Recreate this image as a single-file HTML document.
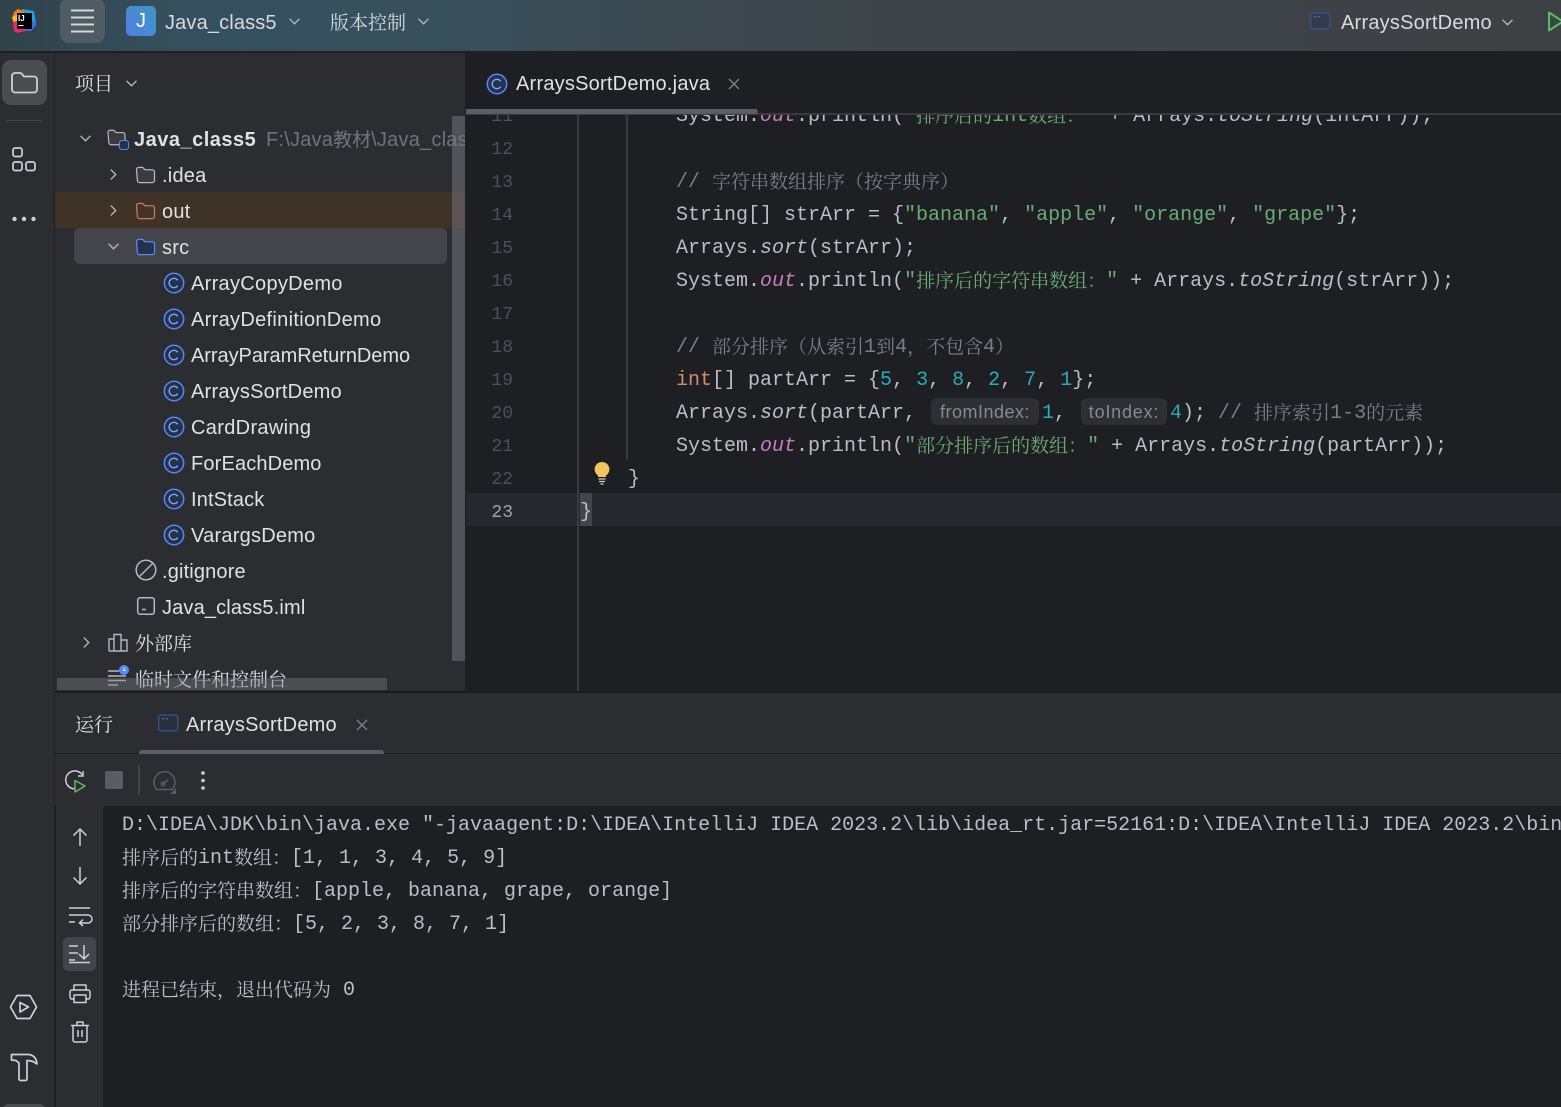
<!DOCTYPE html>
<html lang="zh"><head><meta charset="utf-8"><title>IDE</title>
<style>
*{box-sizing:border-box}
html,body{margin:0;padding:0;width:1561px;height:1107px;overflow:hidden;background:#1e1f22}
body{position:relative;font-family:"Liberation Sans","Noto Serif CJK SC",sans-serif;color:#dfe1e5}
.a{position:absolute}
.t{position:absolute;white-space:pre;font-size:20px;line-height:36px;height:36px;color:#dfe1e5;letter-spacing:.22px;margin-top:1px}
.z{font-family:"Noto Serif CJK SC",serif;font-size:19px;letter-spacing:0;margin-top:0}
.c{position:absolute;white-space:pre;font-family:"Liberation Mono","Noto Serif CJK SC",monospace;font-size:20px;line-height:33px;height:33px;color:#bcbec4;margin-top:1px}
.c i{font-style:italic}
.c b{font-weight:normal;font-family:"Noto Serif CJK SC",serif;font-size:19px;line-height:0;position:relative;top:1px}
.o{color:#c77dbb;font-style:italic}.s{color:#6aab73}.n{color:#2aacb8}.k{color:#cf8e6d}.m{color:#7a7e85}
.ln{position:absolute;left:470px;width:43px;text-align:right;font-family:"Liberation Mono",monospace;font-size:18px;line-height:33px;height:33px;color:#4b5059;margin-top:2px}
svg{position:absolute;overflow:visible;fill:none}
.hint{position:absolute;height:27px;top:398px;background:#2d2f33;border-radius:6px;color:#868a91;font-size:18px;line-height:28px;text-align:center;white-space:pre}
</style></head><body>
<svg width="0" height="0" style="position:absolute"><defs>
<symbol id="cls" viewBox="0 0 22 22" overflow="visible"><circle cx="11" cy="11" r="9.7" fill="#25324d" stroke="#548af7" stroke-width="1.5"/><path d="M14.7 8.3a4.7 4.7 0 1 0 0 5.4" stroke="#7ea6f5" stroke-width="1.4" fill="none"/></symbol>
<symbol id="fold" viewBox="0 0 22 20" overflow="visible"><path d="M1 4a2.5 2.5 0 0 1 2.5-2.500h4.300l2.700 2.700h8a2.500 2.500 0 0 1 2.500 2.500v9.300a2.500 2.500 0 0 1-2.500 2.500h-14a2.500 2.500 0 0 1-2.500-2.500z" stroke-width="1.4" stroke-linejoin="round"/></symbol>
<symbol id="chd" viewBox="0 0 14 10" overflow="visible"><path d="M1.500 2l5.500 5.500L12.500 2" stroke="#b4b8bf" stroke-width="1.500" fill="none"/></symbol>
<symbol id="chr" viewBox="0 0 10 14" overflow="visible"><path d="M2 1.500L7.500 7L2 12.500" stroke="#b4b8bf" stroke-width="1.500" fill="none"/></symbol>
<symbol id="win" viewBox="0 0 22 18" overflow="visible"><rect x=".7" y=".7" width="20" height="16.500" rx="2.500" fill="rgba(37,50,77,.45)" stroke="#35538f" stroke-width="1.400"/><path d="M4 4.500h2.500M8 4.500h2.500" stroke="#4a6fae" stroke-width="1.200"/></symbol>
</defs></svg>

<!-- title bar -->
<div class="a" style="left:0;top:0;width:1561px;height:51px;background:linear-gradient(90deg,#31424a 0,#34505e 180px,#37505c 420px,#3d464c 760px,#3e4144 1561px)"></div>
<div class="a" style="left:0;top:51px;width:1561px;height:2px;background:#1e1f22"></div>
<svg style="left:12px;top:9px" width="24" height="24" viewBox="0 0 24 24"><path d="M10 0L22 2 24 14 20 21 10 22z" fill="#1f9fe8"/><path d="M16 12h8v4l-5 6h-7z" fill="#3b6cf0"/><path d="M6 0L12 2 12 10 0 10 2 3z" fill="#f97a12"/><path d="M0 8l5-2 1 6-4 3z" fill="#f6c21c"/><path d="M1 13l7-2 6 11-9 2-3-2z" fill="#f0266f"/><rect x="5" y="4" width="15" height="16" fill="#000"/><text x="6" y="12" font-family="Liberation Sans" font-weight="bold" font-size="8" fill="#fff">IJ</text><path d="M6.500 16.500h5" stroke="#fff" stroke-width="1"/></svg>
<div class="a" style="left:60px;top:-2px;width:45px;height:45px;border-radius:9px;background:#4e5c63"></div>
<svg style="left:71px;top:10px" width="24" height="23"><path d="M0 1h23M0 8h23M0 15h23M0 22h23" stroke="#d5d7da" stroke-width="2" transform="translate(0 -.500)"/></svg>
<div class="a" style="left:126px;top:6px;width:30px;height:30px;border-radius:5px;background:linear-gradient(45deg,#5080e4,#3e96c0);color:#fff;font-size:20px;line-height:30px;text-align:center">J</div>
<div class="t" style="left:165px;top:4px;color:#d7dadf;letter-spacing:.15px">Java_class5</div>
<svg style="left:288px;top:17px" width="13" height="9"><use href="#chd" width="13" height="9"/></svg>
<div class="t z" style="left:330px;top:4px;color:#d7dadf">版本控制</div>
<svg style="left:417px;top:17px" width="13" height="9"><use href="#chd" width="13" height="9"/></svg>
<svg style="left:1310px;top:12px" width="21" height="18"><use href="#win" width="21" height="18"/></svg>
<div class="t" style="left:1341px;top:4px;color:#d7dadf">ArraysSortDemo</div>
<svg style="left:1501px;top:18px" width="13" height="9"><use href="#chd" width="13" height="9"/></svg>
<svg style="left:1548px;top:11px" width="16" height="21"><path d="M1 1.500L15 10.500 1 19.500z" stroke="#5fb865" stroke-width="2" stroke-linejoin="round" fill="#334a40"/></svg>

<!-- left stripe -->
<div class="a" style="left:0;top:53px;width:55px;height:1054px;background:#2b2d30;border-right:1px solid #1e1f22"></div>
<div class="a" style="left:2px;top:60px;width:45px;height:45px;border-radius:9px;background:#4a4c50"></div>
<svg style="left:11px;top:72px" width="27" height="23" stroke="#ced0d6"><path d="M1 4a3 3 0 0 1 3-3h6l3 3.500h10a3 3 0 0 1 3 3v10a3 3 0 0 1-3 3h-19a3 3 0 0 1-3-3z" stroke-width="1.800" stroke-linejoin="round"/></svg>
<div class="a" style="left:6px;top:120px;width:36px;height:1px;background:#43454a"></div>
<svg style="left:12px;top:147px" width="24" height="24" stroke="#ced0d6" stroke-width="1.700"><rect x="1" y="1" width="9" height="8.500" rx="2"/><rect x="1" y="15" width="9" height="8.500" rx="2"/><rect x="14" y="15" width="9" height="8.500" rx="2"/></svg>
<svg style="left:12px;top:216px" width="24" height="6" fill="#ced0d6"><circle cx="2.500" cy="3" r="2.200" fill="#ced0d6"/><circle cx="12" cy="3" r="2.200" fill="#ced0d6"/><circle cx="21.500" cy="3" r="2.200" fill="#ced0d6"/></svg>
<svg style="left:9px;top:994px" width="30" height="26" stroke="#ced0d6" stroke-width="1.700" stroke-linejoin="round"><path d="M1.500 13L8 1.500h13L27.500 13 21 24.500H8z"/><path d="M11 8.500l8.500 4.500-8.500 5z"/></svg>
<svg style="left:10px;top:1052px" width="28" height="30" stroke="#ced0d6" stroke-width="1.700" stroke-linejoin="round"><path d="M1.500 2.500H18C23 2.500 26.500 6 27 12 24 9.500 21 8.500 17 8.500V27a1.500 1.500 0 0 1-1.500 1.500h-5A1.500 1.500 0 0 1 9 27V11L6 8.500 1.500 8z"/></svg>
<div class="a" style="left:3px;top:1104px;width:42px;height:10px;border-radius:6px;background:#4a4c50"></div>

<!-- project panel -->
<div class="a" style="left:55px;top:53px;width:410px;height:638px;background:#2b2d30"></div>
<div class="t z" style="left:75px;top:65px;color:#dfe1e5">项目</div>
<svg style="left:125px;top:79px" width="13" height="9"><use href="#chd" width="13" height="9"/></svg>
<div class="a" style="left:55px;top:192px;width:410px;height:36px;background:#3f3226"></div>
<div class="a" style="left:74px;top:228px;width:373px;height:36px;border-radius:6px;background:#43454a"></div>

<svg style="left:79px;top:134px" width="13" height="9"><use href="#chd" width="13" height="9"/></svg>
<svg style="left:106px;top:129px" width="22" height="20" stroke="#b4b8bf"><use href="#fold" width="21" height="17" fill="#393b40"/></svg>
<div class="a" style="left:119px;top:140px;width:10px;height:10px;border:1.500px solid #548af7;border-radius:3px;background:#25324d"></div>
<div class="t" style="left:134px;top:121px;font-weight:bold;color:#dfe1e5;letter-spacing:.5px">Java_class5</div>
<div class="a" style="left:266px;top:121px;width:199px;height:36px;overflow:hidden"><div class="t" style="left:0;top:0;color:#6f737a">F:\Java<span style="font-family:'Noto Sans CJK SC',sans-serif;font-size:19px;line-height:0;letter-spacing:0">教材</span>\Java_class5</div></div>

<svg style="left:109px;top:168px" width="9" height="13"><use href="#chr" width="9" height="13"/></svg>
<svg style="left:135px;top:166px" width="21" height="18" stroke="#b4b8bf"><use href="#fold" width="21" height="18" fill="#393b40"/></svg>
<div class="t" style="left:162px;top:157px">.idea</div>
<svg style="left:109px;top:204px" width="9" height="13"><use href="#chr" width="9" height="13"/></svg>
<svg style="left:135px;top:202px" width="21" height="18" stroke="#c77d55"><use href="#fold" width="21" height="18" fill="#45322b"/></svg>
<div class="t" style="left:162px;top:193px">out</div>
<svg style="left:107px;top:242px" width="13" height="9"><use href="#chd" width="13" height="9"/></svg>
<svg style="left:135px;top:238px" width="21" height="18" stroke="#548af7"><use href="#fold" width="21" height="18" fill="#25324d"/></svg>
<div class="t" style="left:162px;top:229px">src</div>

<svg style="left:163px;top:272px" width="22" height="22"><use href="#cls" width="22" height="22"/></svg><div class="t" style="left:191px;top:265px;letter-spacing:.3px">ArrayCopyDemo</div>
<svg style="left:163px;top:308px" width="22" height="22"><use href="#cls" width="22" height="22"/></svg><div class="t" style="left:191px;top:301px;letter-spacing:.31px">ArrayDefinitionDemo</div>
<svg style="left:163px;top:344px" width="22" height="22"><use href="#cls" width="22" height="22"/></svg><div class="t" style="left:191px;top:337px;letter-spacing:-.05px">ArrayParamReturnDemo</div>
<svg style="left:163px;top:380px" width="22" height="22"><use href="#cls" width="22" height="22"/></svg><div class="t" style="left:191px;top:373px">ArraysSortDemo</div>
<svg style="left:163px;top:416px" width="22" height="22"><use href="#cls" width="22" height="22"/></svg><div class="t" style="left:191px;top:409px;letter-spacing:.33px">CardDrawing</div>
<svg style="left:163px;top:452px" width="22" height="22"><use href="#cls" width="22" height="22"/></svg><div class="t" style="left:191px;top:445px;letter-spacing:.15px">ForEachDemo</div>
<svg style="left:163px;top:488px" width="22" height="22"><use href="#cls" width="22" height="22"/></svg><div class="t" style="left:191px;top:481px;letter-spacing:.15px">IntStack</div>
<svg style="left:163px;top:524px" width="22" height="22"><use href="#cls" width="22" height="22"/></svg><div class="t" style="left:191px;top:517px;letter-spacing:.24px">VarargsDemo</div>

<svg style="left:135px;top:560px" width="22" height="22" stroke="#b4b8bf" stroke-width="1.500"><circle cx="11" cy="10" r="9.800"/><path d="M4.500 16.500L17.500 3.500"/></svg>
<div class="t" style="left:162px;top:553px;letter-spacing:.15px">.gitignore</div>
<svg style="left:137px;top:597px" width="18" height="18" stroke="#b4b8bf" stroke-width="1.500"><rect x=".7" y=".7" width="16.600" height="16.600" rx="2.500"/><path d="M5 12.500h4"/></svg>
<div class="t" style="left:162px;top:589px;letter-spacing:.15px">Java_class5.iml</div>
<svg style="left:82px;top:636px" width="9" height="13"><use href="#chr" width="9" height="13"/></svg>
<svg style="left:108px;top:633px" width="20" height="19" stroke="#b4b8bf" stroke-width="1.400"><path d="M1 18V6h5v12M6 18V1.500h7V18M13 18V7h6v11zM1 18h18"/></svg>
<div class="t z" style="left:135px;top:625px">外部库</div>
<svg style="left:108px;top:665px" width="26" height="20" stroke="#b4b8bf" stroke-width="1.400"><path d="M0 6h12M0 11h18M0 15.500h18M0 20h10"/><circle cx="16" cy="5" r="5" fill="#548af7" stroke="none"/><path d="M16 2.500v3h2" stroke="#fff" stroke-width="1"/></svg>
<div class="t z" style="left:135px;top:661px">临时文件和控制台</div>
<div class="a" style="left:57px;top:678px;width:330px;height:12px;background:rgba(120,122,128,.42)"></div>
<div class="a" style="left:452px;top:116px;width:13px;height:545px;background:rgba(120,122,128,.5)"></div>

<!-- editor -->
<div class="a" style="left:466px;top:114px;width:1095px;height:577px;overflow:hidden;background:#1e1f22">
 <div class="a" style="left:0;top:379px;width:1095px;height:33px;background:#26282e"></div>
 <div class="a" style="left:114px;top:379px;width:12px;height:33px;background:#43454a"></div>
</div>
<div class="a" style="left:466px;top:53px;width:1095px;height:60px;background:#1e1f22"></div>
<svg style="left:486px;top:73px" width="22" height="22"><use href="#cls" width="22" height="22"/></svg>
<div class="t" style="left:516px;top:65px;color:#dfe1e5">ArraysSortDemo.java</div>
<svg style="left:728px;top:78px" width="12" height="12" stroke="#797c82" stroke-width="1.500"><path d="M1 1l10 10M11 1L1 11"/></svg>

<div class="a" style="left:466px;top:114px;width:1095px;height:577px;overflow:hidden">
 <div class="ln" style="left:4px;top:-15px">11</div>
 <div class="c" style="left:210px;top:-15px">System.<span class="o">out</span>.println(<span class="s">"<b>排序后的</b>int<b>数组：</b>"</span> + Arrays.<i>toString</i>(intArr));</div>
</div>
<div class="a" style="left:577px;top:114px;width:1.500px;height:577px;background:#393b40"></div>
<div class="a" style="left:626px;top:114px;width:1.500px;height:346px;background:#393b40"></div>
<div class="a" style="left:466px;top:113px;width:1095px;height:1.500px;background:#393b40"></div>
<div class="a" style="left:466px;top:109px;width:292px;height:5px;border-radius:0 3px 3px 0;background:#5a5d63"></div>

<div class="ln" style="top:132px">12</div>
<div class="ln" style="top:165px">13</div>
<div class="ln" style="top:198px">14</div>
<div class="ln" style="top:231px">15</div>
<div class="ln" style="top:264px">16</div>
<div class="ln" style="top:297px">17</div>
<div class="ln" style="top:330px">18</div>
<div class="ln" style="top:363px">19</div>
<div class="ln" style="top:396px">20</div>
<div class="ln" style="top:429px">21</div>
<div class="ln" style="top:462px">22</div>
<div class="ln" style="top:495px;color:#a1a3ab">23</div>

<div class="c m" style="left:676px;top:165px">// <b>字符串数组排序（按字典序）</b></div>
<div class="c" style="left:676px;top:198px">String[] strArr = {<span class="s">"banana"</span>, <span class="s">"apple"</span>, <span class="s">"orange"</span>, <span class="s">"grape"</span>};</div>
<div class="c" style="left:676px;top:231px">Arrays.<i>sort</i>(strArr);</div>
<div class="c" style="left:676px;top:264px">System.<span class="o">out</span>.println(<span class="s">"<b>排序后的字符串数组：</b>"</span> + Arrays.<i>toString</i>(strArr));</div>
<div class="c m" style="left:676px;top:330px">// <b>部分排序（从索引</b>1<b>到</b>4<b>，不包含</b>4<b>）</b></div>
<div class="c" style="left:676px;top:363px"><span class="k">int</span>[] partArr = {<span class="n">5</span>, <span class="n">3</span>, <span class="n">8</span>, <span class="n">2</span>, <span class="n">7</span>, <span class="n">1</span>};</div>
<div class="c" style="left:676px;top:396px">Arrays.<i>sort</i>(partArr,</div>
<div class="hint" style="left:931px;width:108px;letter-spacing:.5px">fromIndex:</div>
<div class="c" style="left:1042px;top:396px"><span class="n">1</span>,</div>
<div class="hint" style="left:1081px;width:86px;letter-spacing:.8px">toIndex:</div>
<div class="c" style="left:1170px;top:396px"><span class="n">4</span>); <span class="m">// <b>排序索引</b>1-3<b>的元素</b></span></div>
<div class="c" style="left:676px;top:429px">System.<span class="o">out</span>.println(<span class="s">"<b>部分排序后的数组：</b>"</span> + Arrays.<i>toString</i>(partArr));</div>
<div class="c" style="left:628px;top:462px">}</div>
<div class="c" style="left:580px;top:495px">}</div>
<svg style="left:594px;top:461px" width="16" height="24"><path d="M8 1a7.300 7.300 0 0 1 4 13.500V16H4v-1.500A7.300 7.300 0 0 1 8 1z" fill="#f2c55c"/><path d="M4.500 18h7M5 20.500h6M6.500 23h3" stroke="#ced0d6" stroke-width="1.300"/></svg>

<!-- bottom panel -->
<div class="a" style="left:55px;top:691px;width:1506px;height:2px;background:#1a1b1d"></div>
<div class="a" style="left:55px;top:693px;width:1506px;height:113px;background:#2b2d30"></div>
<div class="a" style="left:55px;top:753px;width:1506px;height:1px;background:#1e1f22"></div>
<div class="t z" style="left:75px;top:706px">运行</div>
<svg style="left:158px;top:714px" width="21" height="18"><use href="#win" width="21" height="18"/></svg>
<div class="t" style="left:186px;top:706px">ArraysSortDemo</div>
<svg style="left:356px;top:719px" width="12" height="12" stroke="#797c82" stroke-width="1.500"><path d="M1 1l10 10M11 1L1 11"/></svg>
<div class="a" style="left:139px;top:750px;width:245px;height:4px;border-radius:3px 3px 0 0;background:#5a5d63"></div>
<svg style="left:65px;top:770px" width="22" height="24"><path d="M14.500 17.500A9 9 0 1 1 17 4.500" stroke="#ced0d6" stroke-width="1.500"/><path d="M18 1v5h-5" stroke="#ced0d6" stroke-width="1.500"/><path d="M10 10.500l10 5.500-10 6z" stroke="#5fb865" stroke-width="1.500" stroke-linejoin="round" fill="#2b2d30"/></svg>
<div class="a" style="left:105px;top:771px;width:18px;height:18px;border-radius:2px;background:#5a5d63"></div>
<div class="a" style="left:138px;top:765px;width:1.500px;height:30px;background:#43454a"></div>
<svg style="left:153px;top:772px" width="24" height="22"><path d="M4 17.500a10.500 10.500 0 1 1 15 0z" stroke="#5a5d63" stroke-width="1.500" stroke-linejoin="round"/><path d="M10 12l5-4" stroke="#5a5d63" stroke-width="1.500"/><circle cx="10" cy="12" r="1.800" stroke="#5a5d63" stroke-width="1.300"/><path d="M23 16v6h-6z" fill="#5a5d63"/></svg>
<svg style="left:201px;top:771px" width="4" height="19"><circle cx="2" cy="2" r="1.800" fill="#ced0d6"/><circle cx="2" cy="9.500" r="1.800" fill="#ced0d6"/><circle cx="2" cy="17" r="1.800" fill="#ced0d6"/></svg>

<div class="a" style="left:55px;top:806px;width:48px;height:301px;background:#2b2d30;border-left:1px solid #1e1f22"></div>
<svg style="left:72px;top:828px" width="16" height="18" stroke="#ced0d6" stroke-width="1.500"><path d="M8 18V1M1.500 7.500L8 1l6.500 6.500"/></svg>
<svg style="left:72px;top:867px" width="16" height="18" stroke="#ced0d6" stroke-width="1.500"><path d="M8 0v17M1.500 10.500L8 17l6.500-6.500"/></svg>
<svg style="left:69px;top:907px" width="22" height="18" stroke="#ced0d6" stroke-width="1.500"><path d="M0 1h21M0 8h19a3.500 3.500 0 0 1 0 8h-8M14 12.500L10.500 16l3.500 3M0 15h6"/></svg>
<div class="a" style="left:63px;top:937px;width:33px;height:34px;border-radius:5px;background:#43454a"></div>
<svg style="left:69px;top:945px" width="22" height="18" stroke="#ced0d6" stroke-width="1.500"><path d="M0 1h9M0 8h9M0 15h6M0 17.500h21M15 0v14M10 9l5 5 5-5"/></svg>
<svg style="left:69px;top:984px" width="22" height="20" stroke="#ced0d6" stroke-width="1.500" stroke-linejoin="round"><path d="M5 6V1h12v5M5 15H3a2 2 0 0 1-2-2V8a2 2 0 0 1 2-2h16a2 2 0 0 1 2 2v5a2 2 0 0 1-2 2h-2"/><rect x="5" y="11" width="12" height="7.500"/></svg>
<svg style="left:71px;top:1021px" width="19" height="22" stroke="#ced0d6" stroke-width="1.500" stroke-linejoin="round"><path d="M0 4.500h18M6 4.500V1h6v3.500M2 4.500V19a2 2 0 0 0 2 2h10a2 2 0 0 0 2-2V4.500M7 9v7M11 9v7"/></svg>

<div class="c" style="left:122px;top:808px;width:1439px;overflow:hidden">D:\IDEA\JDK\bin\java.exe "-javaagent:D:\IDEA\IntelliJ IDEA 2023.2\lib\idea_rt.jar=52161:D:\IDEA\IntelliJ IDEA 2023.2\bin" -Dfile.encoding=UTF-8</div>
<div class="c" style="left:122px;top:841px"><b>排序后的</b>int<b>数组：</b>[1, 1, 3, 4, 5, 9]</div>
<div class="c" style="left:122px;top:874px"><b>排序后的字符串数组：</b>[apple, banana, grape, orange]</div>
<div class="c" style="left:122px;top:907px"><b>部分排序后的数组：</b>[5, 2, 3, 8, 7, 1]</div>
<div class="c" style="left:122px;top:973px"><b>进程已结束，退出代码为</b> 0</div>
</body></html>
